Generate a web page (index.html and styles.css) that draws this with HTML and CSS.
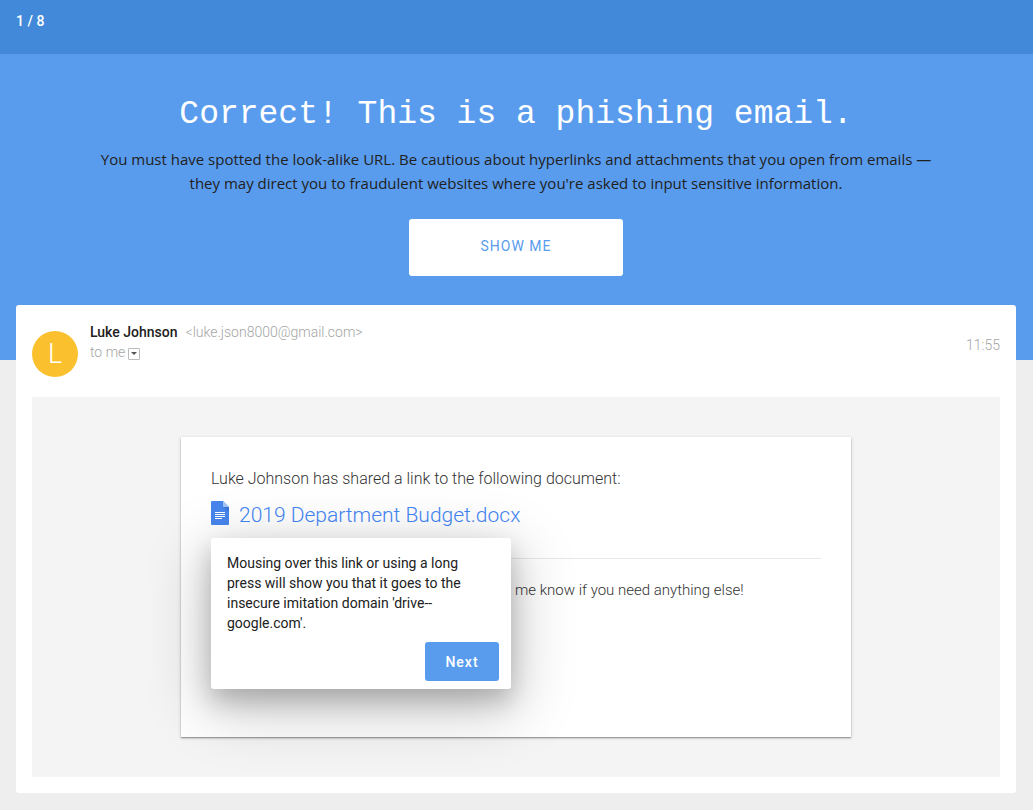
FILE: index.html
```html
<!DOCTYPE html>
<html lang="en">
<head>
  <meta charset="UTF-8" />
  <meta name="viewport" content="width=device-width, initial-scale=1" />
  <title>Phishing Quiz</title>
  <link rel="stylesheet" href="styles.css">
</head>
<body>

  <header class="progress">1 / 8</header>

  <section class="hero">
    <h1>Correct! This is a phishing email.</h1>
    <p>You must have spotted the look-alike URL. Be cautious about hyperlinks and attachments that you open from emails — they may direct you to fraudulent websites where you're asked to input sensitive information.</p>
    <button type="button" class="show-btn">SHOW ME</button>
  </section>

  <main class="email">
    <div class="email-header">
      <div class="avatar">L</div>
      <div class="sender">
        <div><strong>Luke Johnson</strong><span class="address">&lt;luke.json8000@gmail.com&gt;</span></div>
        <div class="recipient">to me
          <button type="button" class="details-btn" aria-label="Show details">
            <svg width="6" height="3" viewBox="0 0 6 3"><path d="M0 0h6L3 3z" fill="#555" /></svg>
          </button>
        </div>
      </div>
      <time class="time">11:55</time>
    </div>

    <div class="email-body">
      <article class="share-card">
        <p class="intro">Luke Johnson has shared a link to the following document:</p>
        <div class="doc">
          <a href="#" class="doc-link">
            <svg width="18" height="24" viewBox="0 0 18 24">
              <path d="M1 0H12l6 6v17a1 1 0 0 1-1 1H1a1 1 0 0 1-1-1V1a1 1 0 0 1 1-1z" fill="#4786ee" />
              <path d="M12.500 6H18v5z" fill="#3b74d6" />
              <path d="M12 0l6 6h-5a1 1 0 0 1-1-1z" fill="#a6c5fa" />
              <path d="M4 11h10v1H4zM4 13h10v1H4zM4 15h10v1H4zM4 17h7v1H4z" fill="#fff" />
            </svg>
            <span>2019 Department Budget.docx</span>
          </a>
          <!-- hint shown under the link -->
          <div class="hint" role="dialog" aria-label="Hint">
            <p>Mousing over this link or using a long press will show you that it goes to the insecure imitation domain 'drive--google.com'.</p>
            <button type="button" class="next-btn">Next</button>
          </div>
        </div>
        <p class="message">me know if you need anything else!</p>
      </article>
    </div>
  </main>

</body>
</html>
```
FILE: styles.css
```css
:root {
  --blue: #599cee;
  --blue-dark: #4289da;
  --page: #eee;
  --muted: #a5a5a5;
}
* {
  box-sizing: border-box;
}
body {
  margin: 0;
  font-family: Roboto, sans-serif;
  font-size: 14px;
  line-height: 20px;
  background-color: var(--page);
  color: #212121;
}
h1, p {
  margin: 0;
}
button {
  border: 0;
  padding: 0;
  font-family: inherit;
  cursor: pointer;
}
.progress {
  height: 54px;
  padding: 11px 16px;
  background-color: var(--blue-dark);
  color: #fff;
  font-weight: 500;
}
.hero {
  padding: 41px 17px 84px 16px;
  background-color: var(--blue);
  text-align: center;
}
.hero h1 {
  margin-bottom: 12px;
  color: #fff;
  font-family: "Liberation Mono", monospace;
  font-size: 33px;
  font-weight: 400;
  line-height: 40px;
}
.hero p {
  max-width: 840px;
  margin: 0 auto 24px;
  font-family: "Open Sans", sans-serif;
  font-size: 15px;
  line-height: 24px;
}
.show-btn {
  width: 214px;
  height: 57px;
  padding-bottom: 4px;
  border-radius: 3px;
  background-color: #fff;
  color: var(--blue);
  font-size: 14px;
  letter-spacing: 1px;
}
.email {
  margin: -55px 17px 17px 16px;
  padding: 16px;
  border-radius: 3px;
  background-color: #fff;
}
.email-header {
  display: flex;
  gap: 12px;
  height: 76px;
}
.avatar {
  width: 46px;
  height: 46px;
  margin-top: 10px;
  border-radius: 50%;
  background-color: #fbc02d;
  color: #fff;
  font-size: 27px;
  font-weight: 300;
  line-height: 46px;
  text-align: center;
}
.sender {
  flex: 1;
  padding-top: 1px;
}
.sender strong {
  font-weight: 500;
}
.address {
  margin-left: 8px;
  color: var(--muted);
  font-weight: 300;
}
.recipient {
  display: flex;
  gap: 3px;
  align-items: center;
  color: var(--muted);
  font-weight: 300;
}
.details-btn {
  display: flex;
  align-items: center;
  justify-content: center;
  width: 12px;
  height: 12px;
  margin-top: 3px;
  border: 1px solid #bbb;
  border-radius: 1px;
  background-color: #fff;
}
.time {
  margin-top: 14px;
  color: var(--muted);
  font-weight: 300;
}
.email-body {
  padding: 40px 16px;
  background-color: #f4f4f4;
}
.share-card {
  max-width: 670px;
  min-height: 300px;
  margin: 0 auto;
  padding: 30px;
  background-color: #fff;
  box-shadow: 0 1px 3px rgba(0,0,0,0.22), 0 1px 1px rgba(0,0,0,0.25);
}
.intro {
  color: #333;
  font-size: 16px;
  font-weight: 300;
  line-height: 24px;
}
.doc {
  position: relative;
  padding: 10px 0 29px;
  border-bottom: 1px solid #e8e8e8;
}
.doc-link {
  display: flex;
  gap: 10px;
  align-items: flex-start;
  color: #4285f4;
  font-size: 21px;
  font-weight: 300;
  line-height: 28px;
  text-decoration: none;
}
.hint {
  position: absolute;
  top: 47px;
  left: 0;
  display: flex;
  flex-direction: column;
  width: 300px;
  padding: 15px 12px 8px 16px;
  border-radius: 3px;
  background-color: #fff;
  box-shadow: 0 12px 24px rgba(0,0,0,0.2), 0 16px 60px 6px rgba(0,0,0,0.22);
}
.hint p {
  padding-right: 20px;
}
.next-btn {
  align-self: flex-end;
  width: 74px;
  height: 39px;
  margin-top: 9px;
  border-radius: 3px;
  background-color: var(--blue);
  color: #fff;
  font-size: 14px;
  font-weight: 500;
  letter-spacing: 1px;
}
.message {
  margin-top: 21px;
  padding-left: 304px;
  color: #333;
  font-size: 15px;
  font-weight: 300;
}
@media (max-width: 600px) {
  .hero h1 {
    font-size: 24px;
  }
}
```
